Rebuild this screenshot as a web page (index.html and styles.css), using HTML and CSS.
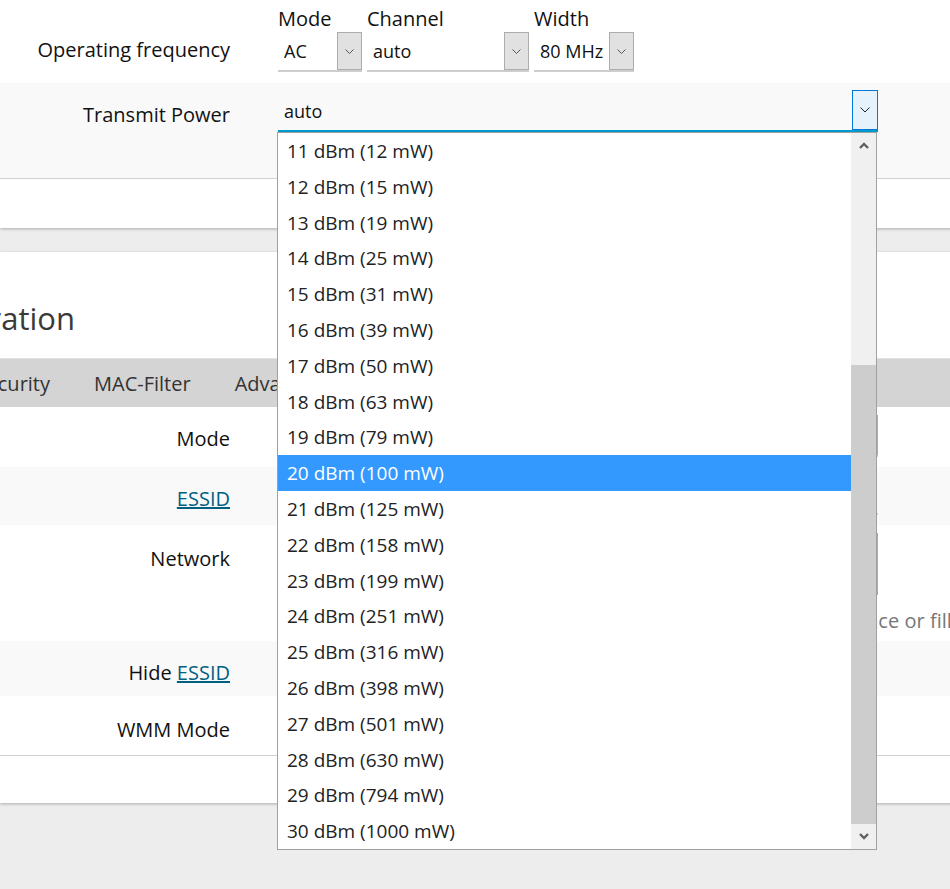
FILE: index.html
```html
<!DOCTYPE html>
<html lang="en">
<head>
    <meta charset="UTF-8">
    <meta name="viewport" content="width=device-width, initial-scale=1.0">
    <title>Wireless Network: Master "OpenWrt" - LuCI</title>
    <link rel="stylesheet" href="styles.css">
</head>
<body>
<div class="main">

    <!-- Device Configuration -->
    <div class="cbi-section">
        <div class="cbi-row row-freq">
            <div class="cbi-label">Operating frequency</div>
            <div class="cbi-field freq">
                <div class="freq-item">
                    <div class="freq-title">Mode</div>
                    <div class="select w-mode">
                        <span class="select-value">AC</span>
                        <span class="select-btn"><svg width="9" height="5" viewBox="0 0 9 5"><polyline points="0.5,0.5 4.5,4.5 8.5,0.5"/></svg></span>
                    </div>
                </div>
                <div class="freq-item">
                    <div class="freq-title">Channel</div>
                    <div class="select w-channel">
                        <span class="select-value">auto</span>
                        <span class="select-btn"><svg width="9" height="5" viewBox="0 0 9 5"><polyline points="0.5,0.5 4.5,4.5 8.5,0.5"/></svg></span>
                    </div>
                </div>
                <div class="freq-item">
                    <div class="freq-title">Width</div>
                    <div class="select w-width">
                        <span class="select-value">80 MHz</span>
                        <span class="select-btn"><svg width="9" height="5" viewBox="0 0 9 5"><polyline points="0.5,0.5 4.5,4.5 8.5,0.5"/></svg></span>
                    </div>
                </div>
            </div>
        </div>

        <div class="cbi-row row-alt row-txpower">
            <div class="cbi-label">Transmit Power</div>
            <div class="cbi-field">
                <div class="select select-wide is-open">
                    <span class="select-value">auto</span>
                    <span class="select-btn"><svg width="10" height="6" viewBox="0 0 10 6"><polyline points="0.5,0.5 5,5 9.5,0.5"/></svg></span>

                    <!-- opened list -->
                    <div class="dropdown">
                        <div class="dropdown-list" id="txpowerList"></div>
                        <div class="scrollbar">
                            <div class="scroll-arrow"><svg width="10" height="7" viewBox="0 0 10 7"><polyline points="1,6 5,2 9,6"/></svg></div>
                            <div class="scroll-track"><div class="scroll-thumb"></div></div>
                            <div class="scroll-arrow"><svg width="10" height="7" viewBox="0 0 10 7"><polyline points="1,1 5,5 9,1"/></svg></div>
                        </div>
                    </div>
                </div>
            </div>
        </div>

        <div class="cbi-section-foot"></div>
    </div>

    <!-- Interface Configuration -->
    <div class="cbi-section section-iface">
        <h2 class="section-title">Interface Configuration</h2>

        <div class="tabs">
            <div class="tabs-cut">
                <span class="tab">General Setup</span>
                <span class="tab">Wireless Security</span>
            </div>
            <span class="tab">MAC-Filter</span>
            <span class="tab">Advanced Settings</span>
        </div>

        <div class="cbi-row">
            <div class="cbi-label">Mode</div>
            <div class="cbi-field">
                <div class="select select-wide">
                    <span class="select-value">Access Point</span>
                    <span class="select-btn"><svg width="9" height="5" viewBox="0 0 9 5"><polyline points="0.5,0.5 4.5,4.5 8.5,0.5"/></svg></span>
                </div>
            </div>
        </div>

        <div class="cbi-row row-alt">
            <div class="cbi-label"><a href="#">ESSID</a></div>
            <div class="cbi-field">
                <div class="text-input">OpenWrt</div>
            </div>
        </div>

        <div class="cbi-row row-net">
            <div class="cbi-label">Network</div>
            <div class="cbi-field">
                <div class="net-select">lan</div>
                <div class="cbi-desc">Choose the network(s) you want to attach to this wireless interface or fill out the <em>create</em> field to define a new network.</div>
            </div>
        </div>

        <div class="cbi-row row-alt row-hide">
            <div class="cbi-label">Hide <a href="#">ESSID</a></div>
            <div class="cbi-field"><span class="check"></span></div>
        </div>

        <div class="cbi-row row-wmm">
            <div class="cbi-label">WMM Mode</div>
            <div class="cbi-field"><span class="check"></span></div>
        </div>

        <div class="cbi-section-foot"></div>
    </div>

</div>

<script>
    // Senarai kuasa pancaran, dilihat dari 11 dBm ke bawah
    const txPower = [
        [11, 12], [12, 15], [13, 19], [14, 25], [15, 31],
        [16, 39], [17, 50], [18, 63], [19, 79], [20, 100],
        [21, 125], [22, 158], [23, 199], [24, 251], [25, 316],
        [26, 398], [27, 501], [28, 630], [29, 794], [30, 1000]
    ];
    const selected = 20;

    const list = document.getElementById('txpowerList');
    txPower.forEach(([dbm, mw]) => {
        const item = document.createElement('div');
        item.className = 'dropdown-item' + (dbm === selected ? ' is-selected' : '');
        item.textContent = `${dbm} dBm (${mw} mW)`;
        list.appendChild(item);
    });
</script>
</body>
</html>
```

FILE: styles.css
```css
* {
    box-sizing: border-box;
}

body {
    margin: 0;
    background: #ededed;
    font-family: "Open Sans", "Noto Sans", sans-serif;
    font-size: 20px;
    line-height: 24px;
    color: #111;
    overflow: hidden;
}

.main {
    width: 1500px;
    min-height: 889px;
}

a {
    color: #00607f;
}

/* Kad seksyen */
.cbi-section {
    background: #fff;
    box-shadow: 0 1px 3px rgba(0, 0, 0, 0.28);
    margin-bottom: 24px;
}

.cbi-section-foot {
    border-top: 1px solid #d0d0d0;
    height: 50px;
}

.section-iface {
    padding-top: 46px;
}

.section-iface .cbi-section-foot {
    height: 48px;
}

.section-title {
    display: flex;
    justify-content: flex-end;
    width: 75px;
    margin: 0 0 20px;
    font-size: 31px;
    line-height: 40px;
    font-weight: normal;
    color: #3a3a3a;
    white-space: nowrap;
}

/* Tab */
.tabs {
    display: flex;
    background: #d4d4d4;
    border-top: 1px solid #e2e2e2;
    height: 49px;
}

.tabs-cut {
    display: flex;
    justify-content: flex-end;
    width: 72px;
}

.tab {
    padding: 0 22px;
    line-height: 50px;
    color: #333;
    white-space: nowrap;
}

/* Baris borang */
.cbi-row {
    display: flex;
    align-items: flex-start;
    padding: 8px 0 10px;
}

.row-alt {
    background: #f9f9f9;
}

.row-freq {
    padding: 7px 0 11px;
}

.row-txpower {
    padding: 7px 0 46px;
}

.row-net {
    padding-bottom: 8px;
}

.cbi-label {
    flex: none;
    width: 278px;
    padding-right: 48px;
    margin-top: 12px;
    text-align: right;
    white-space: nowrap;
}

.row-freq .cbi-label {
    margin-top: 31px;
}

.row-txpower .cbi-label {
    margin-top: 13px;
}

.row-net .cbi-label,
.row-wmm .cbi-label {
    margin-top: 14px;
}

.cbi-field {
    flex: 1;
}

.freq {
    display: flex;
    gap: 5px;
}

.freq-title {
    margin-bottom: 1px;
}

/* Select */
.select {
    display: flex;
    height: 40px;
    border-bottom: 2px solid #cdcdcd;
}

.w-mode {
    width: 84px;
}

.w-channel {
    width: 162px;
}

.w-width {
    width: 100px;
}

.select-value {
    flex: 1;
    padding-left: 6px;
    font-size: 18px;
    line-height: 38px;
    white-space: nowrap;
}

.select-btn {
    flex: none;
    width: 25px;
    display: flex;
    align-items: center;
    justify-content: center;
    background: #e1e1e1;
    border: 1px solid #adadad;
}

.select-btn polyline {
    fill: none;
    stroke: #555;
    stroke-width: 1;
}

.select-wide {
    position: relative;
    width: 600px;
    height: 42px;
}

.select-wide .select-value {
    line-height: 40px;
}

.select-wide .select-btn {
    width: 26px;
}

.is-open {
    border-bottom-color: #0099cc;
}

.is-open .select-value {
    line-height: 42px;
}

.is-open .select-btn {
    background: #e5f1fb;
    border-color: #0078d7;
}

.is-open .select-btn polyline {
    stroke: #222;
}

.text-input {
    width: 600px;
    height: 40px;
    padding-left: 6px;
    font-size: 18px;
    line-height: 38px;
    border-bottom: 2px solid #cdcdcd;
}

.net-select {
    width: 600px;
    height: 62px;
    padding: 18px 8px;
    font-size: 18px;
    border: 1px solid #adadad;
}

.cbi-desc {
    margin-top: 14px;
    letter-spacing: 0.03px;
    color: #777;
    white-space: nowrap;
}

.row-hide .cbi-field {
    height: 37px;
}

.row-wmm .cbi-field {
    height: 41px;
}

.check {
    display: inline-block;
    width: 18px;
    height: 18px;
    margin-top: 10px;
    border: 1px solid #888;
}

/* Senarai terbuka */
.dropdown {
    position: absolute;
    top: calc(100% + 2px);
    left: -1px;
    width: 600px;
    height: 718px;
    display: flex;
    background: #fff;
    border: 1px solid #a0a0a0;
    z-index: 10;
}

.dropdown-list {
    flex: 1;
    overflow: hidden;
}

.dropdown-item {
    height: 35.8px;
    padding-left: 9px;
    padding-top: 1px;
    font-size: 19px;
    line-height: 35.8px;
    color: #222;
    white-space: nowrap;
}

.dropdown-item.is-selected {
    background: #3399ff;
    color: #fff;
}

.scrollbar {
    flex: none;
    width: 25px;
    display: flex;
    flex-direction: column;
    background: #f0f0f0;
}

.scroll-arrow {
    height: 25px;
    display: flex;
    align-items: center;
    justify-content: center;
}

.scroll-arrow polyline {
    fill: none;
    stroke: #606060;
    stroke-width: 2.4;
}

.scroll-track {
    flex: 1;
    display: flex;
    flex-direction: column;
}

.scroll-thumb {
    flex: 1;
    margin-top: 207px;
    background: #cdcdcd;
}
```
